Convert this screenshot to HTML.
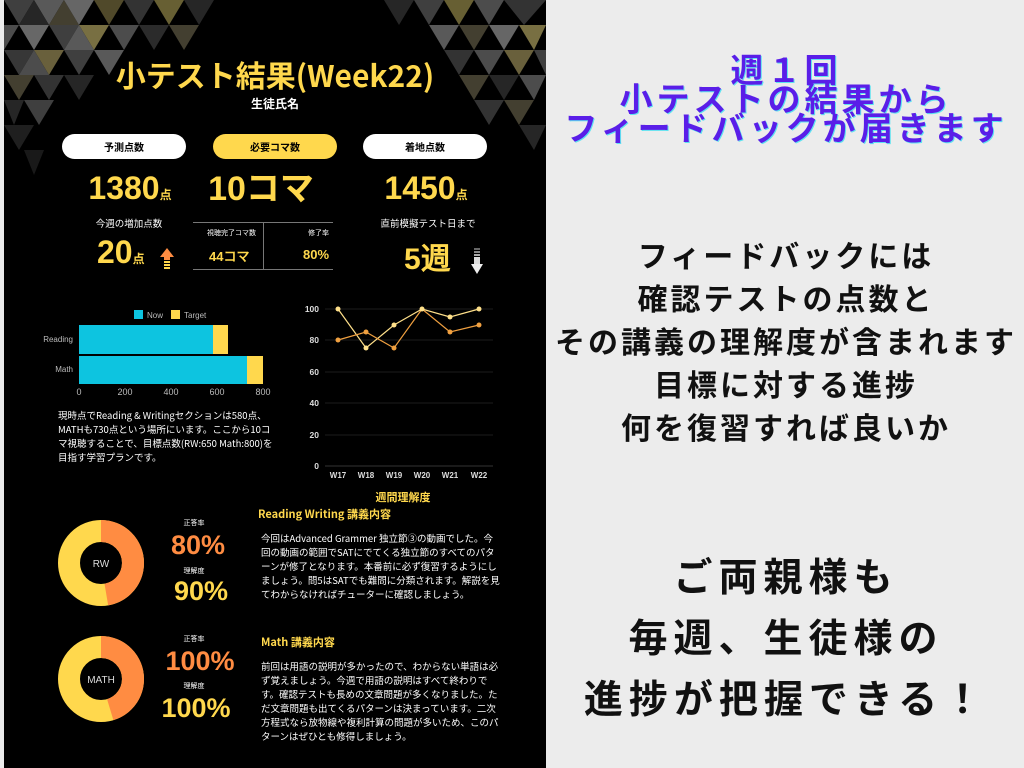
<!DOCTYPE html>
<html><head><meta charset="utf-8"><style>
*{margin:0;padding:0;box-sizing:border-box}
body{width:1024px;height:768px;background:#ececec;position:relative;overflow:hidden;font-family:"Liberation Sans","Noto Sans CJK JP",sans-serif}
.jp{font-family:"Noto Sans CJK JP","Liberation Sans",sans-serif}
#L{position:absolute;left:4px;top:0;width:542px;height:768px;background:#000;overflow:hidden}
.a{position:absolute;white-space:nowrap}
.c{transform:translateX(-50%)}
.y{color:#ffd84d}
.o{color:#ff8c42}
.w{color:#fff}
.num{font-family:"Liberation Sans",sans-serif;font-weight:bold}
.pill{position:absolute;top:134px;height:25px;border-radius:13px;background:#fff;color:#000;font-size:10px;font-weight:bold;text-align:center;line-height:25px}
.p{font-size:9.5px;line-height:14px;color:#fff;white-space:normal}
.R{position:absolute;left:548px;width:476px;text-align:center;font-weight:bold}
</style></head><body>
<div id="L">
<svg class="a" style="left:0;top:0" width="542" height="330">
<g opacity="0.75">
<polygon points="0,0 30,0 15,25" fill="#555"/>
<polygon points="30,0 60,0 45,25" fill="#777"/>
<polygon points="15,25 45,25 30,0" fill="#333"/>
<polygon points="45,25 75,25 60,0" fill="#5a5440"/>
<polygon points="60,0 90,0 75,25" fill="#888"/>
<polygon points="90,0 120,0 105,25" fill="#6b6238"/>
<polygon points="120,0 150,0 135,25" fill="#444"/>
<polygon points="150,0 180,0 165,25" fill="#8a7f45"/>
<polygon points="180,0 210,0 195,25" fill="#333"/>
<polygon points="0,25 15,25 0,50" fill="#666"/>
<polygon points="15,25 45,25 30,50" fill="#8a8a8a"/>
<polygon points="45,25 75,25 60,50" fill="#555"/>
<polygon points="75,25 105,25 90,50" fill="#a09458"/>
<polygon points="60,50 90,50 75,25" fill="#777"/>
<polygon points="105,25 135,25 120,50" fill="#666"/>
<polygon points="135,25 165,25 150,50" fill="#3a3a3a"/>
<polygon points="165,25 195,25 180,50" fill="#5a5440"/>
<polygon points="0,50 30,50 15,75" fill="#4a4a4a"/>
<polygon points="30,50 60,50 45,75" fill="#8c8150"/>
<polygon points="60,50 90,50 75,75" fill="#555"/>
<polygon points="90,50 120,50 105,75" fill="#777"/>
<polygon points="15,75 45,75 30,50" fill="#666"/>
<polygon points="0,75 30,75 15,100" fill="#5a5440"/>
<polygon points="30,75 60,75 45,100" fill="#444"/>
<polygon points="60,75 90,75 75,100" fill="#333"/>
<polygon points="0,100 20,100 10,125" fill="#333"/>
<polygon points="20,100 50,100 35,125" fill="#555"/>
<polygon points="0,125 30,125 15,150" fill="#2a2a2a"/>
<polygon points="20,150 40,150 30,175" fill="#222"/>
<polygon points="380,0 410,0 395,25" fill="#333"/>
<polygon points="410,0 440,0 425,25" fill="#555"/>
<polygon points="440,0 470,0 455,25" fill="#8a7f45"/>
<polygon points="470,0 500,0 485,25" fill="#666"/>
<polygon points="500,0 542,0 520,25" fill="#444"/>
<polygon points="425,25 455,25 440,50" fill="#777"/>
<polygon points="455,25 485,25 470,50" fill="#5a5440"/>
<polygon points="485,25 515,25 500,50" fill="#888"/>
<polygon points="515,25 542,25 530,50" fill="#a09458"/>
<polygon points="440,50 470,50 455,75" fill="#444"/>
<polygon points="470,50 500,50 485,75" fill="#666"/>
<polygon points="500,50 530,50 515,75" fill="#8c8150"/>
<polygon points="530,50 542,50 542,75" fill="#555"/>
<polygon points="455,75 485,75 470,100" fill="#5a5440"/>
<polygon points="485,75 515,75 500,100" fill="#333"/>
<polygon points="515,75 542,75 530,100" fill="#666"/>
<polygon points="470,100 500,100 485,125" fill="#444"/>
<polygon points="500,100 530,100 515,125" fill="#5a5440"/>
<polygon points="515,125 542,125 530,150" fill="#333"/>
</g>
</svg>
<div class="a c y jp" style="left:271px;top:52px;font-size:30px;font-weight:bold">小テスト結果(Week22)</div>
<div class="a c w jp" style="left:271px;top:95px;font-size:12px;font-weight:bold">生徒氏名</div>
<div class="pill jp" style="left:58px;width:124px">予測点数</div>
<div class="pill jp" style="left:209px;width:124px;background:#ffd84d">必要コマ数</div>
<div class="pill jp" style="left:359px;width:124px">着地点数</div>
<div class="a c y num" style="left:126px;top:170px;font-size:32px">1380<span class="jp" style="font-size:12px">点</span></div>
<div class="a c y num" style="left:257px;top:161px;font-size:34px">10<span class="jp">コマ</span></div>
<div class="a c y num" style="left:422px;top:170px;font-size:32px">1450<span class="jp" style="font-size:12px">点</span></div>
<div class="a c w jp" style="left:125px;top:216px;font-size:9.5px">今週の増加点数</div>
<div class="a y num" style="left:93px;top:234px;font-size:32px">20<span class="jp" style="font-size:12px">点</span></div>
<svg class="a" style="left:156px;top:248px" width="14" height="30"><polygon points="7,0 14,9 10,9 10,12 4,12 4,9 0,9" fill="#ff8c42"/><rect x="4" y="13" width="6" height="2" fill="#ffd84d"/><rect x="4" y="16" width="6" height="2" fill="#ffd84d"/><rect x="4" y="19" width="6" height="2" fill="#ffd84d"/></svg>
<div class="a" style="left:189px;top:222px;width:140px;height:48px;border-top:1px solid #777;border-bottom:1px solid #777"></div>
<div class="a" style="left:259px;top:222px;width:1px;height:48px;background:#777"></div>
<div class="a w jp" style="left:203px;top:228px;font-size:7px">視聴完了コマ数</div>
<div class="a w jp" style="left:304px;top:228px;font-size:7px">修了率</div>
<div class="a y num jp" style="left:205px;top:246px;font-size:13px">44コマ</div>
<div class="a y num" style="left:299px;top:247px;font-size:13px">80%</div>
<div class="a c w jp" style="left:424px;top:216px;font-size:9.5px">直前模擬テスト日まで</div>
<div class="a y num jp" style="left:400px;top:234px;font-size:30px">5週</div>
<svg class="a" style="left:467px;top:248px" width="12" height="28"><rect x="3" y="0" width="6" height="2" fill="#666"/><rect x="3" y="3" width="6" height="2" fill="#888"/><rect x="3" y="6" width="6" height="2" fill="#aaa"/><rect x="3" y="9" width="6" height="7" fill="#ddd"/><polygon points="0,16 12,16 6,26" fill="#eee"/></svg>

<svg class="a" style="left:-4px;top:290px" width="548" height="220" font-family="Liberation Sans, sans-serif">
<rect x="134" y="20" width="9" height="9" fill="#0dc4e0"/><text x="147" y="28" font-size="8" fill="#bbb">Now</text>
<rect x="171" y="20" width="9" height="9" fill="#ffd84d"/><text x="184" y="28" font-size="8" fill="#bbb">Target</text>
<rect x="79" y="35" width="134" height="29" fill="#0dc4e0"/><rect x="213" y="35" width="15" height="29" fill="#ffd84d"/>
<rect x="79" y="66" width="168" height="28" fill="#0dc4e0"/><rect x="247" y="66" width="16" height="28" fill="#ffd84d"/>
<text x="73" y="52" font-size="8" fill="#bbb" text-anchor="end">Reading</text>
<text x="73" y="82" font-size="8" fill="#bbb" text-anchor="end">Math</text>
<g font-size="9" fill="#bbb" text-anchor="middle"><text x="79" y="105">0</text><text x="125" y="105">200</text><text x="171" y="105">400</text><text x="217" y="105">600</text><text x="263" y="105">800</text></g>
<g stroke="#1c1c1c" stroke-width="1"><line x1="325" y1="19" x2="493" y2="19"/><line x1="325" y1="50" x2="493" y2="50"/><line x1="325" y1="82" x2="493" y2="82"/><line x1="325" y1="113" x2="493" y2="113"/><line x1="325" y1="145" x2="493" y2="145"/><line x1="325" y1="176" x2="493" y2="176" stroke="#333"/></g>
<g font-size="8.5" fill="#ddd" font-weight="bold" text-anchor="end"><text x="319" y="22">100</text><text x="319" y="53">80</text><text x="319" y="85">60</text><text x="319" y="116">40</text><text x="319" y="148">20</text><text x="319" y="179">0</text></g>
<g font-size="8" fill="#ddd" font-weight="bold" text-anchor="middle"><text x="338" y="188">W17</text><text x="366" y="188">W18</text><text x="394" y="188">W19</text><text x="422" y="188">W20</text><text x="450" y="188">W21</text><text x="479" y="188">W22</text></g>
<polyline points="338,19 366,58 394,35 422,19 450,27 479,19" fill="none" stroke="#ffe08a" stroke-width="1.2"/>
<polyline points="338,50 366,42 394,58 422,19 450,42 479,35" fill="none" stroke="#f0a040" stroke-width="1.2"/>
<g fill="#ffe08a"><circle cx="338" cy="19" r="2.5"/><circle cx="366" cy="58" r="2.5"/><circle cx="394" cy="35" r="2.5"/><circle cx="422" cy="19" r="2.5"/><circle cx="450" cy="27" r="2.5"/><circle cx="479" cy="19" r="2.5"/></g>
<g fill="#f0a040"><circle cx="338" cy="50" r="2.5"/><circle cx="366" cy="42" r="2.5"/><circle cx="394" cy="58" r="2.5"/><circle cx="450" cy="42" r="2.5"/><circle cx="479" cy="35" r="2.5"/></g>
</svg>
<div class="a p jp" style="left:54px;top:408px;width:220px">現時点でReading &amp; Writingセクションは580点、MATHも730点という場所にいます。ここから10コマ視聴することで、目標点数(RW:650 Math:800)を目指す学習プランです。</div>
<div class="a c y jp" style="left:399px;top:489px;font-size:11px;font-weight:bold">週間理解度</div>

<svg class="a" style="left:-4px;top:500px" width="250" height="268" font-family="Liberation Sans, sans-serif">
<circle cx="101" cy="63" r="32" fill="none" stroke="#ffd84d" stroke-width="22"/>
<circle cx="101" cy="63" r="32" fill="none" stroke="#ff8c42" stroke-width="22" stroke-dasharray="95 300" transform="rotate(-90 101 63)"/>
<text x="101" y="67" font-size="10" fill="#ddd" text-anchor="middle">RW</text>
<circle cx="101" cy="179" r="32" fill="none" stroke="#ffd84d" stroke-width="22"/>
<circle cx="101" cy="179" r="32" fill="none" stroke="#ff8c42" stroke-width="22" stroke-dasharray="91 300" transform="rotate(-90 101 179)"/>
<text x="101" y="183" font-size="10" fill="#ddd" text-anchor="middle">MATH</text>
</svg>
<div class="a c w jp" style="left:190px;top:518px;font-size:7px">正答率</div>
<div class="a c o num" style="left:194px;top:530px;font-size:27px">80%</div>
<div class="a c w jp" style="left:190px;top:566px;font-size:7px">理解度</div>
<div class="a c y num" style="left:197px;top:576px;font-size:27px">90%</div>
<div class="a c w jp" style="left:190px;top:634px;font-size:7px">正答率</div>
<div class="a c o num" style="left:196px;top:646px;font-size:27px">100%</div>
<div class="a c w jp" style="left:190px;top:681px;font-size:7px">理解度</div>
<div class="a c y num" style="left:192px;top:693px;font-size:27px">100%</div>
<div class="a y jp" style="left:254px;top:506px;font-size:11px;font-weight:bold">Reading Writing 講義内容</div>
<div class="a p jp" style="left:257px;top:531px;width:240px">今回はAdvanced Grammer 独立節③の動画でした。今回の動画の範囲でSATにでてくる独立節のすべてのパターンが修了となります。本番前に必ず復習するようにしましょう。問5はSATでも難問に分類されます。解説を見てわからなければチューターに確認しましょう。</div>
<div class="a y jp" style="left:257px;top:634px;font-size:11px;font-weight:bold">Math 講義内容</div>
<div class="a p jp" style="left:257px;top:659px;width:240px">前回は用語の説明が多かったので、わからない単語は必ず覚えましょう。今週で用語の説明はすべて終わりです。確認テストも長めの文章問題が多くなりました。ただ文章問題も出てくるパターンは決まっています。二次方程式なら放物線や複利計算の問題が多いため、このパターンはぜひとも修得しましょう。</div>
</div>

<div class="R jp" style="top:54px;font-size:33px;line-height:29px;letter-spacing:4px;color:#5a1ee8;text-shadow:1px 1px 0 #5ee3f0">週１回<br>小テストの結果から<br>フィードバックが届きます</div>
<div class="R jp" style="top:233px;font-size:30px;line-height:43px;letter-spacing:3px;color:#111">フィードバックには<br>確認テストの点数と<br>その講義の理解度が含まれます<br>目標に対する進捗<br>何を復習すれば良いか</div>
<div class="R jp" style="top:545px;font-size:39px;line-height:61px;letter-spacing:6px;color:#111">ご両親様も<br>毎週、生徒様の<br>進捗が把握できる！</div>
</body></html>
